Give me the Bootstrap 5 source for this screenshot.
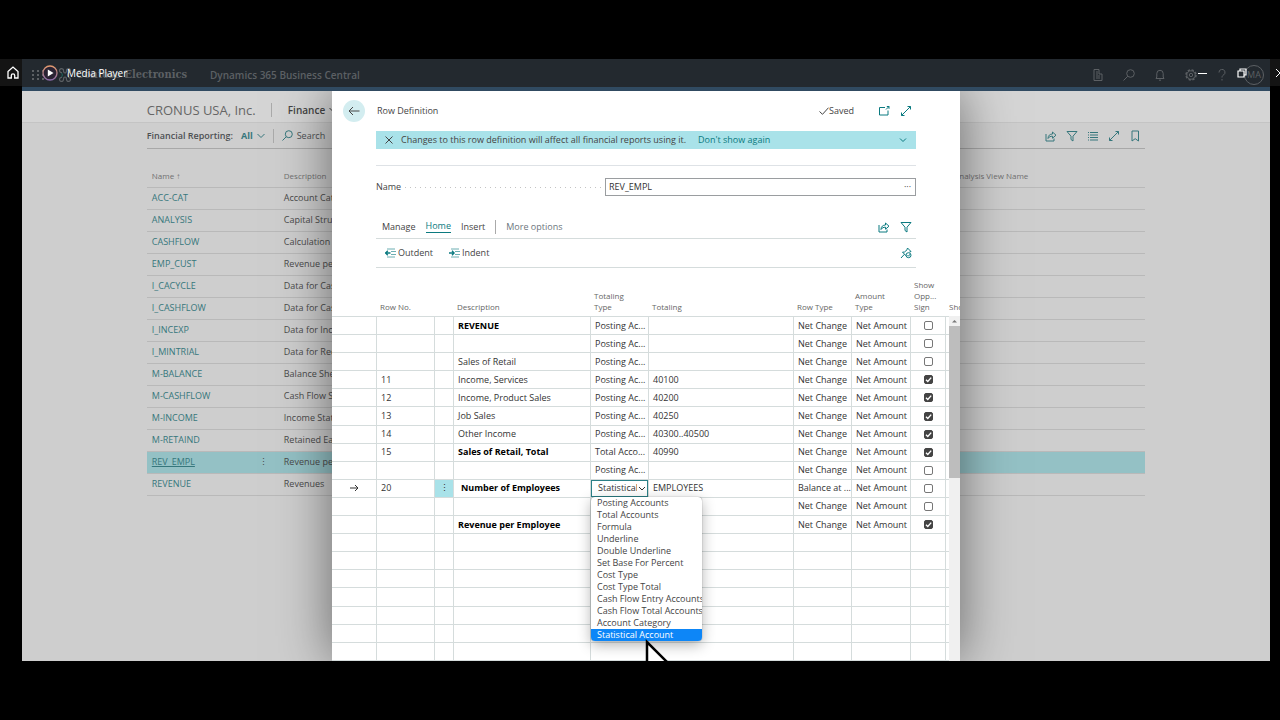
<!DOCTYPE html>
<html lang="en">
<head>
<meta charset="utf-8">
<meta name="viewport" content="width=device-width, initial-scale=1">
<title>Row Definition - Dynamics 365 Business Central</title>
<link href="https://cdn.jsdelivr.net/npm/bootstrap@5.3.0/dist/css/bootstrap.min.css" rel="stylesheet">
<style>
  :root { --teal: #0b7a80; --line: #d5dcdc; --banner: #a9e2e9; }
  body { background: #000; color: #444; font-family: "Open Sans", "Noto Sans", sans-serif; font-size: 9px; line-height: 12px; }
  svg { display: block; fill: none; stroke: currentColor; flex: none; }
  a { color: inherit; }
  button { font: inherit; color: inherit; background: none; border: 0; padding: 0; }

  .screen { padding: 59px 10px 59px 22px; }
  .app-bar { height: 28px; background: #23292f; color: #5c6064; padding: 4px 6px 0 10px; }
  .app-bar .waffle { fill: currentColor; stroke: none; }
  .app-stripe { height: 4px; background: #304a61; }
  .app-logo { margin-left: 14px; }
  .brand { font: bold 11px/16px "DejaVu Serif Condensed", "DejaVu Serif", serif; }
  .product { font-size: 10px; font-weight: 600; margin-left: 23px; }
  .app-tools { gap: 19px; margin-right: 16px; }
  .avatar { width: 20px; height: 20px; border: 1px solid #5c6064; }

  .list-page { background: #cecece; }
  .company-bar { height: 32px; background: #d5d5d5; border-bottom: 1px solid #c4c4c4; padding-top: 12px; }
  .page-width { width: 80%; margin: 0 auto; }
  .company { font-size: 13px; color: #666; width: 124px; }
  .area { font-size: 10px; font-weight: 600; color: #444; }
  .vrule { width: 1px; height: 14px; background: #aaa; }
  .cmd-bar { height: 26px; border-bottom: 1px solid #a8a8a8; }
  .list-tools { gap: 9px; }
  .muted-teal { color: #36777c; }
  .reports { width: 100%; table-layout: fixed; margin-top: 16px; color: #4a4a4a; }
  .reports th { font-weight: 400; font-size: 8px; color: #707070; }
  .reports th, .reports td { height: 22px; padding: 0 5px; border-bottom: 1px solid #b9b9b9; white-space: nowrap; overflow: hidden; }
  .reports a { color: #36777c; text-decoration: none; }
  .reports .current td { background: #94c1c5; }
  .reports .current a { text-decoration: underline; }

  .overlay { top: 32px; overflow: hidden; }
  .dialog-page { width: 628px; background: #fff; box-shadow: 0 0 50px rgba(0,0,0,.5); overflow: hidden; }
  .inset { margin-left: 44px; margin-right: 44px; }
  .dialog-head { height: 40px; padding-left: 11px; padding-right: 48px; }
  .back { width: 22px; height: 22px; background: #d3edf0; border-radius: 50%; }
  .notice { height: 18px; background: var(--banner); padding: 0 9px; }
  .notice a { margin-left: 12px; }
  .field-row { height: 18px; margin-top: 12px; }
  .dots { height: 1px; background: repeating-linear-gradient(90deg, #c4c4c4 0 1px, transparent 1px 5px); }
  .field-box { width: 311px; border: 1px solid #9a9da0; }
  .field-box input { font: inherit; color: #333; border: 0; padding: 0 3px; outline: 0; background: none; }
  .tabs { height: 24px; border-bottom: 1px solid var(--line); padding: 0 4px 0 6px; margin-top: 19px; }
  .tabs .on { color: var(--teal); border-bottom: 1px solid var(--teal); margin: 0 10px; }
  .tabs .vrule { margin: 0 10px; }
  .tool-gap { margin-left: 10px; }
  .actions { height: 29px; border-bottom: 1px solid var(--line); padding: 0 4px 0 9px; }
  .actions button { gap: 2px; margin-right: 16px; }
  .teal { color: var(--teal); }

  .rows-area { min-height: 0; overflow: hidden; }
  .rows { width: 100%; height: 100%; table-layout: fixed; border-collapse: separate; border-spacing: 0; color: #333; }
  .rows th { height: 41px; font-weight: 400; font-size: 8px; line-height: 11px; color: #666; vertical-align: bottom; padding: 0 3px 4px; border-bottom: 1px solid var(--line); overflow: hidden; white-space: nowrap; }
  .rows td { height: 18px; padding: 0 0 0 4px; border-bottom: 1px solid var(--line); border-right: 1px solid var(--line); vertical-align: middle; white-space: nowrap; overflow: hidden; }
  .rows .editing td:nth-child(4) { padding-left: 7px; }
  .rows td.menu-on { background: var(--banner); }
  .rows td.picker { overflow: visible; padding: 0; }
  .rows select { font: inherit; color: #333; width: 100%; height: 17px; padding: 0 10px 0 6px; border: 1px solid #2b8087; border-radius: 0; appearance: none; background: #fff; display: block; }
  .chev { top: 6px; right: 2px; }
  .rows input { appearance: none; width: 9px; height: 9px; border: 1px solid #777; border-radius: 2px; display: block; margin: 0 auto; background: #fff center / 9px no-repeat; }
  .rows input:checked { background-color: #444; border-color: #444; background-image: url("data:image/svg+xml,%3Csvg xmlns='http://www.w3.org/2000/svg' viewBox='0 0 9 9'%3E%3Cpath d='M2 4.7l1.8 1.8L7.2 2.6' fill='none' stroke='white' stroke-width='1.4'/%3E%3C/svg%3E"); }
  .choices { top: 17px; left: 0; width: 111px; min-width: 0; padding: 0; margin: 0; border: 0; border-radius: 4px; background: #fff; box-shadow: 0 0 1px rgba(0,0,0,.6), 0 4px 14px rgba(0,0,0,.3); overflow: hidden; font-size: 9px; }
  .choices button { display: block; width: 100%; height: 12px; line-height: 12px; padding-left: 6px; text-align: left; color: #444; }
  .choices .picked { background: #0d86f7; color: #fff; }
  .pointer { top: 157px; left: 53px; z-index: 1100; }
  .track { top: 225px; right: 0; width: 11px; bottom: 0; background: #f0f0f0; }
  .thumb { height: 152px; background: #bdbdbd; }

  .player-bar { top: 59px; height: 27px; color: #fff; }
  .player-bar .edge { background: #141414; height: 27px; }
  .home-edge { width: 22px; padding-left: 7px; }
  .close-edge { width: 10px; padding-left: 5px; overflow: hidden; }
  .play { margin-left: 20px; }
  .player-title { font-size: 10px; margin-left: 9px; }
  .minimize { margin-right: 30px; }
  .restore { margin-right: 23px; }
</style>
</head>
<body>
<div class="screen vh-100 d-flex flex-column">
  <div class="position-relative flex-grow-1 d-flex flex-column overflow-hidden">
    <header class="app-bar d-flex align-items-center">
      <svg class="waffle" width="12" height="12" viewBox="0 0 12 12"><path d="M0 1h2v2H0zM5 1h2v2H5zM10 1h2v2h-2zM0 5h2v2H0zM5 5h2v2H5zM10 5h2v2h-2zM0 9h2v2H0zM5 9h2v2H5zM10 9h2v2h-2z"/></svg>
      <svg class="app-logo" width="14" height="16" viewBox="0 0 14 16" stroke-width="1.200"><path d="M4 5.500a2 2 0 1 1 1.500-2c0 1.500.500 2.500 1.500 2.500s1.500-1 1.500-2.500a2 2 0 1 1 1.500 2M4 10.500a2 2 0 1 0 1.500 2c0-1.500.500-2.500 1.500-2.500s1.500 1 1.500 2.500a2 2 0 1 0 1.500-2"/><path d="M3 6.500C5 6.500 5 9.500 3 9.500" stroke="#1f5a55"/><path d="M11 6.500C9 6.500 9 9.500 11 9.500"/></svg>
      <span class="brand ms-1">Contoso Electronics</span>
      <span class="product">Dynamics 365 Business Central</span>
      <div class="app-tools ms-auto d-flex align-items-center">
        <svg width="12" height="12" viewBox="0 0 12 12"><path d="M2 11.500V.500h5V5h3v6.500zM4 3h2M4 5h2M4 7h4M4 9h4"/></svg>
        <svg width="12" height="12" viewBox="0 0 12 12"><circle cx="7.500" cy="4.500" r="3.800"/><path d="M4.800 7.200L.500 11.500"/></svg>
        <svg width="12" height="12" viewBox="0 0 12 12"><path d="M2 9.500h8L9.200 8V4.500a3.200 3.200 0 0 0-6.400 0V8zM5 11.200h2"/></svg>
        <svg width="12" height="12" viewBox="0 0 12 12"><circle cx="6" cy="6" r="5" stroke-dasharray="2.300 1.620" stroke-width="1.500"/><circle cx="6" cy="6" r="4.200"/><circle cx="6" cy="6" r="1.700"/></svg>
        <svg width="12" height="12" viewBox="0 0 12 12"><path d="M3 3.500a3 3 0 1 1 4.600 2.400C6.500 6.700 6 7.200 6 8.500M6 10v1.500"/></svg>
      </div>
      <span class="avatar rounded-circle d-flex align-items-center justify-content-center">MA</span>
    </header>
    <div class="app-stripe"></div>

    <main class="list-page flex-grow-1">
      <div class="company-bar">
        <div class="page-width d-flex align-items-center">
          <span class="company">CRONUS USA, Inc.</span>
          <span class="vrule"></span>
          <span class="area ms-3">Finance</span>
          <svg class="ms-1" width="8" height="6" viewBox="0 0 8 6"><path d="M.500 1L4 4.500 7.500 1"/></svg>
        </div>
      </div>
      <div class="page-width">
        <div class="cmd-bar d-flex align-items-center muted-teal">
          <span class="fw-semibold text-dark opacity-75">Financial Reporting:</span>
          <span class="fw-bold ms-2 me-1">All</span>
          <svg width="8" height="6" viewBox="0 0 8 6"><path d="M.500 1L4 4.500 7.500 1"/></svg>
          <span class="vrule ms-2"></span>
          <svg class="ms-2 me-1" width="11" height="11" viewBox="0 0 11 11"><circle cx="6.800" cy="4.200" r="3.500"/><path d="M4.300 6.700L.500 10.500"/></svg>
          <span class="text-dark opacity-75">Search</span>
          <div class="list-tools ms-auto d-flex pe-1">
            <svg width="12" height="12" viewBox="0 0 12 12"><path d="M1 4v7h8V8.500M3 8.500c0-3 2-4.500 4.500-4.500V2L11 5.200 7.500 8.200V6.200c-2 0-3.500.600-4.500 2.300z"/></svg>
            <svg width="12" height="12" viewBox="0 0 12 12"><path d="M1 1.500h10L7 6.200V11L5 9.500V6.200z"/></svg>
            <svg width="12" height="12" viewBox="0 0 12 12"><path d="M1 2.500h1M3 2.500h8M1 5h1M3 5h8M1 7.500h1M3 7.500h8M1 10h1M3 10h8"/></svg>
            <svg width="12" height="12" viewBox="0 0 12 12"><path d="M1.500 10.500l9-9M7.500 1.500h3v3M1.500 7.500v3h3"/></svg>
            <svg width="12" height="12" viewBox="0 0 12 12"><path d="M3 1h6.500v10L6.200 8.700 3 11z"/></svg>
          </div>
        </div>
        <table class="reports">
          <colgroup><col style="width:107px"><col style="width:25px"><col><col style="width:196px"></colgroup>
          <thead><tr><th>Name ↑</th><th></th><th>Description</th><th>Analysis View Name</th></tr></thead>
          <tbody id="reports"></tbody>
        </table>
      </div>
    </main>

    <div class="overlay position-absolute start-0 end-0 bottom-0">
      <section class="dialog-page h-100 mx-auto position-relative d-flex flex-column">
        <div class="dialog-head d-flex align-items-center">
          <button class="back d-flex align-items-center justify-content-center me-2" aria-label="Back"><svg width="12" height="10" viewBox="0 0 12 10"><path d="M11.500 5H1M5 1L1 5l4 4"/></svg></button>
          <span class="ms-1">Row Definition</span>
          <svg class="ms-auto" width="10" height="8" viewBox="0 0 10 8"><path d="M.500 4.500L3.500 7.300 9.500.700"/></svg>
          <span>Saved</span>
          <svg class="teal ms-4" width="12" height="12" viewBox="0 0 12 12"><path d="M7 2.500H1.500v7.500h8.500V5.500M8 4.500L11 1.500M8.800 1.500H11V3.800"/></svg>
          <svg class="teal tool-gap" width="12" height="12" viewBox="0 0 12 12"><path d="M1.500 10.500l9-9M7.500 1.500h3v3M1.500 7.500v3h3"/></svg>
        </div>
        <div class="notice inset d-flex align-items-center">
          <button aria-label="Dismiss"><svg width="8" height="8" viewBox="0 0 8 8"><path d="M.500.500l7 7M7.500.500l-7 7"/></svg></button>
          <span class="ms-2">Changes to this row definition will affect all financial reports using it.</span>
          <a href="#" class="teal text-decoration-none">Don't show again</a>
          <svg class="ms-auto teal" width="8" height="6" viewBox="0 0 8 6"><path d="M1 1.500L4 4.500 7 1.500"/></svg>
        </div>
        <div class="inset border-top mt-3"></div>
        <div class="field-row inset d-flex align-items-center">
          <label for="def-name">Name</label>
          <span class="dots flex-grow-1 mx-1"></span>
          <div class="field-box d-flex align-items-center h-100">
            <input id="def-name" class="flex-grow-1" value="REV_EMPL">
            <button class="px-1" aria-label="Look up">···</button>
          </div>
        </div>
        <nav class="tabs inset d-flex align-items-center">
          <a href="#" class="text-decoration-none">Manage</a>
          <a href="#" class="on text-decoration-none">Home</a>
          <a href="#" class="text-decoration-none">Insert</a>
          <span class="vrule"></span>
          <a href="#" class="text-decoration-none text-secondary">More options</a>
          <svg class="teal ms-auto" width="12" height="12" viewBox="0 0 12 12"><path d="M1 4v7h8V8.500M3 8.500c0-3 2-4.500 4.500-4.500V2L11 5.200 7.500 8.200V6.200c-2 0-3.500.600-4.500 2.300z"/></svg>
          <svg class="teal tool-gap" width="12" height="12" viewBox="0 0 12 12"><path d="M1 1.500h10L7 6.200V11L5 9.500V6.200z"/></svg>
        </nav>
        <div class="actions inset d-flex align-items-center">
          <button class="d-flex align-items-center"><svg class="teal" width="11" height="10" viewBox="0 0 11 10"><path d="M2 1h8M6 3.500h5M6 6.500h5M2 9h8" opacity=".6"/><path d="M5.500 5H0M2.800 2.800L.700 5l2.100 2.200" stroke-width="1.300"/></svg>Outdent</button>
          <button class="d-flex align-items-center"><svg class="teal" width="11" height="10" viewBox="0 0 11 10"><path d="M2 1h8M6 3.500h5M6 6.500h5M2 9h8" opacity=".6"/><path d="M0 5h5.500M3 2.800L5.100 5 3 7.200" stroke-width="1.300"/></svg>Indent</button>
          <svg class="teal ms-auto" width="12" height="12" viewBox="0 0 12 12"><path d="M7.500 1l3.500 3.500-1.500.500M7.500 1L7 2.800 4.500 5 2.500 5.200l4 4M4.500 7.200L1 11"/><circle cx="8.500" cy="8.200" r="2.500"/><path d="M7.500 8.200l1 1 1.500-2"/></svg>
        </div>
        <div class="rows-area flex-grow-1 mt-2">
          <table class="rows">
            <colgroup><col style="width:45px"><col style="width:58px"><col style="width:19px"><col style="width:137px"><col style="width:58px"><col style="width:145px"><col style="width:58px"><col style="width:59px"><col style="width:35px"><col></colgroup>
            <thead><tr><th></th><th>Row No.</th><th></th><th>Description</th><th>Totaling<br>Type</th><th>Totaling</th><th>Row Type</th><th>Amount<br>Type</th><th>Show<br>Opp...<br>Sign</th><th>Sho</th></tr></thead>
            <tbody id="rows"></tbody>
          </table>
        </div>
        <div class="track position-absolute">
          <svg width="11" height="10" viewBox="0 0 11 10"><path d="M3 6.500L5.500 4 8 6.500z" stroke="none" fill="#777"/></svg>
          <div class="thumb"></div>
        </div>
      </section>
    </div>
  </div>
</div>

<div class="player-bar position-absolute start-0 end-0 d-flex align-items-center">
  <div class="edge home-edge d-flex align-items-center"><svg width="12" height="13" viewBox="0 0 12 13" stroke-width="1.300"><path d="M1 5.500L6 1l5 4.500V12H7.700V9.500a1.700 1.700 0 0 0-3.400 0V12H1z"/></svg></div>
  <svg class="play" width="16" height="16" viewBox="0 0 16 16">
    <defs><linearGradient id="ring" x1="0" y1="0" x2="0" y2="1"><stop offset="0" stop-color="#e39a6e"/><stop offset="1" stop-color="#8a6aa8"/></linearGradient></defs>
    <circle cx="8" cy="8" r="7" fill="#2a2333" stroke="url(#ring)" stroke-width="1.300"/><path d="M5.800 4.500L11.500 8 5.800 11.500z" fill="#fff" stroke="none"/></svg>
  <span class="player-title">Media Player</span>
  <svg class="minimize ms-auto" width="9" height="10" viewBox="0 0 9 10"><path d="M0 5.500h9"/></svg>
  <svg class="restore" width="10" height="10" viewBox="0 0 10 10" stroke-width="1.200"><path d="M1 3h6v6H1zM3 2.500V1h6v6H7.500"/></svg>
  <div class="edge close-edge d-flex align-items-center"><svg width="10" height="10" viewBox="0 0 10 10"><path d="M1 1l8 8M9 1L1 9"/></svg></div>
</div>

<script src="https://cdn.jsdelivr.net/npm/bootstrap@5.3.0/dist/js/bootstrap.bundle.min.js"></script>
<script>
  const reports = [
    ['ACC-CAT', 'Account Categories'], ['ANALYSIS', 'Capital Structure'], ['CASHFLOW', 'Calculation of Cash Flow'],
    ['EMP_CUST', 'Revenue per Employee'], ['I_CACYCLE', 'Data for Cash Cycle'], ['I_CASHFLOW', 'Data for Cash Flow'],
    ['I_INCEXP', 'Data for Income and Expense'], ['I_MINTRIAL', 'Data for Reduced Trial Balance'], ['M-BALANCE', 'Balance Sheet'],
    ['M-CASHFLOW', 'Cash Flow Statement'], ['M-INCOME', 'Income Statement'], ['M-RETAIND', 'Retained Earnings'],
    ['REV_EMPL', 'Revenue per Employee'], ['REVENUE', 'Revenues']
  ];
  document.getElementById('reports').innerHTML = reports.map(([name, text]) => {
    const on = name === 'REV_EMPL';
    return `<tr class="${on ? 'current' : ''}"><td><a href="#">${name}</a></td><td>${on ? '⋮' : ''}</td><td>${text}</td><td></td></tr>`;
  }).join('');

  const options = ['Posting Accounts', 'Total Accounts', 'Formula', 'Underline', 'Double Underline', 'Set Base For Percent',
    'Cost Type', 'Cost Type Total', 'Cash Flow Entry Accounts', 'Cash Flow Total Accounts', 'Account Category', 'Statistical Account'];
  const post = 'Posting Ac...', net = 'Net Change';
  // number, description, bold, totaling type, totaling, row type, show opposite sign
  const lines = [
    ['', 'REVENUE', 1, post, '', net, 0], ['', '', 0, post, '', net, 0], ['', 'Sales of Retail', 0, post, '', net, 0],
    ['11', 'Income, Services', 0, post, '40100', net, 1], ['12', 'Income, Product Sales', 0, post, '40200', net, 1],
    ['13', 'Job Sales', 0, post, '40250', net, 1], ['14', 'Other Income', 0, post, '40300..40500', net, 1],
    ['15', 'Sales of Retail, Total', 1, 'Total Acco...', '40990', net, 1], ['', '', 0, post, '', net, 0],
    ['20', 'Number of Employees', 1, 'edit', 'EMPLOYEES', 'Balance at ...', 0], ['', '', 0, '', '', net, 0],
    ['', 'Revenue per Employee', 1, '', '', net, 1]
  ];
  const picker = `<div class="position-relative">
      <select aria-label="Totaling Type">${options.map((o, i) => `<option${i === 11 ? ' selected' : ''}>${o}</option>`).join('')}</select>
      <svg class="chev position-absolute" width="8" height="6" viewBox="0 0 8 6"><path d="M1 1L4 4 7 1"/></svg>
      <div class="choices dropdown-menu show">${options.map((o, i) => `<button class="${i === 11 ? 'picked' : ''}">${o}</button>`).join('')}</div>
      <svg class="pointer position-absolute" width="32" height="48" viewBox="0 0 32 48"><path d="M3 5v34l8-7 5 12 6-3-5-11h11z" stroke="#000" fill="#fff" stroke-width="2.500"/></svg>
    </div>`;
  const row = l => {
    const edit = l[3] === 'edit';
    return `<tr class="${edit ? 'editing' : ''}"><td class="text-center p-0">${edit ? '<svg class="mx-auto" width="9" height="8" viewBox="0 0 9 8"><path d="M0 4h8M5 1l3 3-3 3"/></svg>' : ''}</td>
      <td>${l[0]}</td><td class="text-center p-0 ${edit ? 'menu-on' : ''}">${edit ? '⋮' : ''}</td>
      <td class="${l[2] ? 'fw-bold text-black' : ''}">${l[1]}</td>
      <td class="${edit ? 'picker' : ''}">${edit ? picker : l[3]}</td><td>${l[4]}</td><td>${l[5]}</td><td>Net Amount</td>
      <td class="p-0"><input type="checkbox" aria-label="Show opposite sign"${l[6] ? ' checked' : ''}></td><td></td></tr>`;
  };
  document.getElementById('rows').innerHTML = lines.map(row).join('') + `<tr>${'<td></td>'.repeat(10)}</tr>`.repeat(7);
</script>
</body>
</html>
